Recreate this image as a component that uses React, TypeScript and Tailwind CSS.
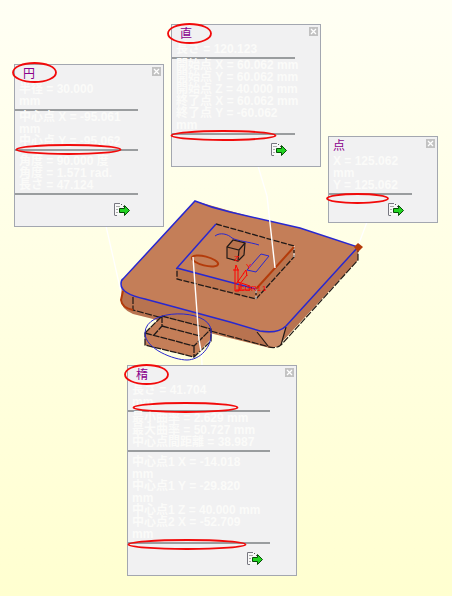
import React from "react";

type Group = { rows: string[]; spaced?: boolean };

type PanelProps = {
  title: string;
  place: string;
  rule: string;
  indent?: string;
  groups: Group[];
};

function ExportIcon() {
  return (
    <svg width="16" height="14" viewBox="0 0 16 14" aria-hidden="true">
      <path d="M0 0h7l3 3v9H0z" fill="#f8f8f8" />
      <path d="M.5 12V.5H6M.5 12.5H3" fill="none" stroke="#777780" />
      <path d="M7 1.5h1M9 3.5h1" stroke="#555" />
      <path d="M2 3.5h4M2 6.5h2M2 9.5h2" stroke="#aaa" />
      <path d="M5.5 5.5h5v-3l5 5-5 5v-3h-5z" fill="#22d422" stroke="#064d06" />
    </svg>
  );
}

function CloseIcon() {
  return (
    <svg width="9" height="9" viewBox="0 0 9 9" aria-hidden="true">
      <path d="M0 0h9v9H0z" fill="#c2c2c2" />
      <path d="M2 2l5 5M7 2L2 7" stroke="#fff" strokeWidth="1.3" />
    </svg>
  );
}

function Panel({ title, place, rule, indent = "pl-2", groups }: PanelProps) {
  return (
    <section className={`absolute border border-[#a3a7b0] bg-[#f1f1f2] ${place}`}>
      <header className={`flex h-[18px] items-start justify-between pt-0.5 pr-0.5 ${indent}`}>
        <h2 className="text-xs leading-3 text-[#8b008b]">{title}</h2>
        <button type="button" aria-label="閉じる" className="block">
          <CloseIcon />
        </button>
      </header>
      {groups.map((group, i) => (
        <div
          key={i}
          className={`border-b-2 border-[#9a9d9f] pb-0.5 pl-1 font-['Liberation_Sans','Noto_Sans_CJK_JP',sans-serif] text-xs leading-3 font-bold whitespace-nowrap text-[#fbfbf9] ${rule} ${group.spaced ? "pt-1" : ""}`}
        >
          {group.rows.map((row, j) => (
            <p key={j} className="h-3">
              {row}
            </p>
          ))}
        </div>
      ))}
      <div className="flex justify-end pt-2 pr-[33px]">
        <button type="button" aria-label="書き出し" className="block">
          <ExportIcon />
        </button>
      </div>
    </section>
  );
}

function Model() {
  return (
    <svg className="absolute top-0 left-0" width="452" height="596" viewBox="0 0 452 596" aria-hidden="true">
      <g fill="none" stroke="#fff" strokeWidth="1.3">
        <path d="M106 226L121 292M258 166L267 196M367 222L358 246M200 318L202 365" />
      </g>

      <path d="M121 288L195 201L358 247V260L281 343Q275 350 266 347L133 314Q121 309 121 300z" fill="#b87350" />
      <path d="M257 331L268 345Q274 349 281 345L286 327Q272 337 257 331z" fill="#cb8b67" />
      <g fill="none" stroke="#221a16" strokeWidth="1.2">
        <path d="M133 297V310L266 346Q276 350 282 344L358 260V247" strokeDasharray="7 1.5" />
        <path d="M257 332L268 346M286 327L281 345" />
      </g>
      <path d="M121 288V300" stroke="#fff" />
      <path d="M123 291L121 300Q122 308 133 310" fill="none" stroke="#b43b0a" strokeWidth="2" />
      <path
        d="M195 201Q212 208 230 212L300 228L358 247L286 326Q278 334 260 331L230 322L145 299Q121 294 121 284Q121 280 123 279z"
        fill="#c47e58"
        stroke="#2828d0"
        strokeWidth="1.5"
      />

      <path d="M177 268V279L256 299L294 257V246L256 289z" fill="#bb744e" />
      <path d="M216 224L294 246V257L256 299L177 279V268M256 289V299" fill="none" stroke="#211a18" strokeWidth="1.3" strokeDasharray="6 1.5" />
      <path d="M256 289V299M294 246V257" stroke="#fff" strokeDasharray="4 3" />
      <path d="M256 289L177 268L216 224" fill="none" stroke="#2828d0" strokeWidth="1.5" />
      <path d="M256 289L294 247" stroke="#b43b0a" strokeWidth="2" />
      <path d="M215 236C220 232 228 234 232 238C237 241 250 242 259 245M247 270L261 254L269 256L256 272z" fill="none" stroke="#2828d0" />

      <path d="M227 247L233 240L245 243L244 255L238 261L227 258z" fill="#b9734e" stroke="#211a18" strokeWidth="1.2" />
      <path d="M227 247L239 250L245 243M239 250L238 261" fill="none" stroke="#211a18" strokeWidth="1.2" />
      <ellipse cx="205" cy="261" rx="13.5" ry="4.5" transform="rotate(14 205 261)" fill="none" stroke="#b43b0a" strokeWidth="2" />
      <path d="M354 247l4-4 5 4-5 5z" fill="#b43b0a" />

      <path d="M145 333L162 316L211 329V339L194 357L145 345z" fill="#c47e58" />
      <path
        d="M145 333L162 316L211 329V341L194 357L145 345zL194 346L211 329M194 346V357M162 316V326L154 335M162 326L200 336"
        fill="none"
        stroke="#211a18"
        strokeWidth="1.3"
        strokeDasharray="7 1"
      />
      <path d="M145 333C145 308 209 308 211 330C213 348 199 360 187 360C174 360 145 349 145 333z" fill="none" stroke="#2828d0" />

      <path d="M193 257L199 340L201 351M267 196L275 268" fill="none" stroke="#fff" strokeWidth="1.4" />

      <g fill="none" stroke="#f00">
        <path d="M235 288V270L236 265L238 270V283M233 270H239M236 284L244 273M239 285L247 275M243 274L246 270L247 276M238 282L250 286V290H236M241 284V289M235 288V291H239V285" />
      </g>
      <g fill="#f00" className="font-['Liberation_Sans'] text-[8px]">
        <text x="234" y="261">Z</text>
        <text x="246" y="269">Y</text>
        <text x="239" y="291">CGR1</text>
        <text x="262" y="291">1</text>
      </g>
    </svg>
  );
}

function Highlights() {
  return (
    <svg className="pointer-events-none absolute top-0 left-0" width="452" height="596" viewBox="0 0 452 596" aria-hidden="true">
      <g fill="none" stroke="#f20a0a" strokeWidth="1.8">
        <ellipse cx="34.5" cy="72.5" rx="21.5" ry="9.5" />
        <ellipse cx="68.5" cy="149.5" rx="52" ry="4.5" />
        <ellipse cx="189.5" cy="33.5" rx="21.5" ry="9.5" />
        <ellipse cx="223.5" cy="135.5" rx="52" ry="4.5" />
        <ellipse cx="357.5" cy="198.5" rx="30.5" ry="4.5" />
        <ellipse cx="146.5" cy="374.5" rx="21.5" ry="9.5" />
        <ellipse cx="185.5" cy="407.5" rx="52" ry="4.5" />
        <ellipse cx="187" cy="544.5" rx="58.5" ry="4.5" />
      </g>
    </svg>
  );
}

export default function App() {
  return (
    <main className="relative min-h-screen overflow-hidden bg-linear-to-b from-[#fffff4] to-[#ffffd0] font-['Noto_Sans_CJK_JP',sans-serif]">
      <Model />
      <Panel
        title="円"
        place="left-[14px] top-[64px] w-[150px] h-[163px]"
        rule="w-[123px]"
        groups={[
          { rows: ["半径 = 30.000", "mm"] },
          { rows: ["中心点 X = -95.061", "mm", "中心点 Y = -95.062"] },
          { rows: ["角度 = 90.000 度", "角度 = 1.571 rad.", "長さ = 47.124"], spaced: true },
        ]}
      />
      <Panel
        title="直"
        place="left-[171px] top-[24px] w-[150px] h-[143px]"
        rule="w-[123px]"
        groups={[
          { rows: ["長さ = 120.123"] },
          {
            rows: [
              "開始点 X = 60.062 mm",
              "開始点 Y = 60.062 mm",
              "開始点 Z = 40.000 mm",
              "終了点 X = 60.062 mm",
              "終了点 Y = -60.062",
              "mm",
            ],
          },
        ]}
      />
      <Panel
        title="点"
        place="left-[328px] top-[136px] w-[110px] h-[87px]"
        rule="w-[83px]"
        indent="pl-1"
        groups={[{ rows: ["X = 125.062", "mm", "Y = 125.062"] }]}
      />
      <Panel
        title="楕"
        place="left-[127px] top-[365px] w-[170px] h-[211px]"
        rule="w-[142px]"
        groups={[
          { rows: ["長さ = 41.704", "mm"] },
          { rows: ["最小曲率 = 2.629 mm", "最大曲率 = 50.727 mm", "中心点間距離 = 38.987"] },
          {
            rows: [
              "中心点1 X = -14.018",
              "mm",
              "中心点1 Y = -29.820",
              "mm",
              "中心点1 Z = 40.000 mm",
              "中心点2 X = -52.709",
              "mm",
            ],
            spaced: true,
          },
        ]}
      />
      <Highlights />
    </main>
  );
}
